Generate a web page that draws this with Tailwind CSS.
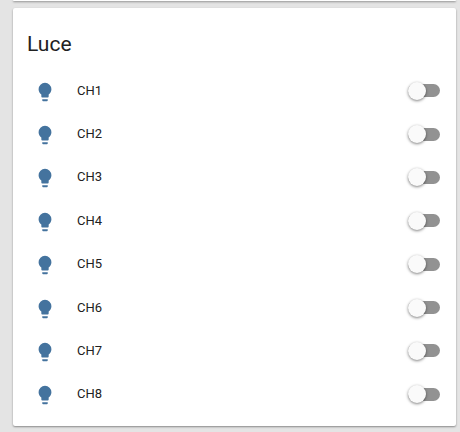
<!DOCTYPE html>
<html lang="it">
<head>
    <meta charset="UTF-8">
    <meta name="viewport" content="width=device-width, initial-scale=1.0">
    <title>Luce</title>
    <script src="https://cdn.jsdelivr.net/npm/@tailwindcss/browser@4"></script>
</head>
<body class="bg-[#e4e4e4] min-h-screen overflow-hidden pl-[13px] pr-1 font-[Roboto,sans-serif] text-[#212121]">
    <!-- Bottom edge of the previous card -->
    <div class="h-px bg-white rounded-b-xs shadow-[0_1px_2px_rgba(0,0,0,0.5)]"></div>

    <main class="mt-[7px] pt-5 pl-3.5 pr-4 pb-2.5 bg-white rounded-xs shadow-[0_1px_2px_rgba(0,0,0,0.4)]">
        <h1 class="text-[21px] leading-8 mb-[9px]">Luce</h1>
        <ul id="lights" class="grid auto-rows-fr min-h-[347px]"></ul>
    </main>

    <template id="lightRow">
        <li class="flex items-center">
            <svg class="size-[22px] ml-[7px] mr-[21px] mt-0.5 fill-[#44739e]" viewBox="0 0 24 24" aria-hidden="true">
                <path d="M12,2A7,7 0 0,0 5,9C5,11.38 6.19,13.47 8,14.74V17A1,1 0 0,0 9,18H15A1,1 0 0,0 16,17V14.74C17.81,13.47 19,11.38 19,9A7,7 0 0,0 12,2M9,21A1,1 0 0,0 10,22H14A1,1 0 0,0 15,21V20H9V21Z" />
            </svg>
            <label class="flex-1 text-[13px] leading-5"></label>
            <input type="checkbox" role="switch"
                class="appearance-none flex items-center w-8 h-[13px] rounded-full bg-[#929292] cursor-pointer
                before:size-[18px] before:shrink-0 before:rounded-full before:bg-[#fafafa]
                before:shadow-[0_1px_3px_rgba(0,0,0,0.5)] before:transition-transform
                checked:bg-[#7bb8ea] checked:before:translate-x-[14px] checked:before:bg-[#03a9f4]">
        </li>
    </template>

    <script>
        const channels = ['CH1', 'CH2', 'CH3', 'CH4', 'CH5', 'CH6', 'CH7', 'CH8'];
        const list = document.getElementById('lights');
        const template = document.getElementById('lightRow');

        channels.forEach((name) => {
            const row = template.content.cloneNode(true);
            const label = row.querySelector('label');
            const input = row.querySelector('input');

            input.id = name.toLowerCase();
            label.htmlFor = input.id;
            label.textContent = name;
            list.appendChild(row);
        });
    </script>
</body>
</html>
